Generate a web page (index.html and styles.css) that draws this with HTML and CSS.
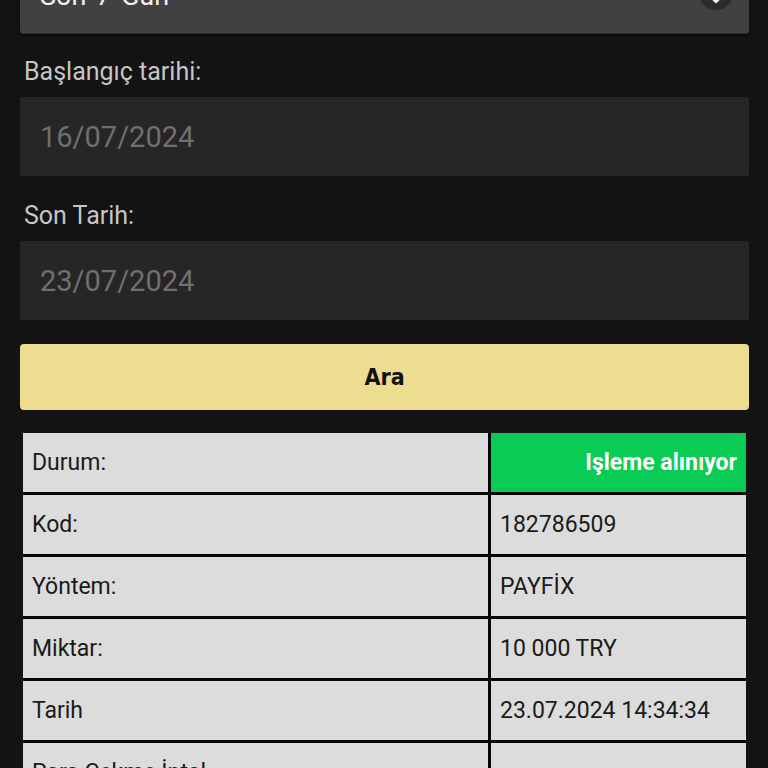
FILE: index.html
```html
<!DOCTYPE html>
<html lang="tr">
<head>
<meta charset="utf-8">
<title>Para Çekme Geçmişi</title>
<link rel="stylesheet" href="styles.css">
</head>
<body>
<div class="page">
  <div class="select">
    <span class="select-text">Son 7 Gün</span>
    <span class="select-btn">
      <svg width="14" height="10" viewBox="0 0 14 10"><path d="M2 2 L7 7 L12 2" fill="none" stroke="#fff" stroke-width="2.4" stroke-linecap="round" stroke-linejoin="round"/></svg>
    </span>
  </div>

  <div class="label first">Başlangıç tarihi:</div>
  <div class="input">16/07/2024</div>

  <div class="label">Son Tarih:</div>
  <div class="input">23/07/2024</div>

  <button class="search">Ara</button>

  <table class="details">
    <colgroup><col class="c1"><col class="c2"></colgroup>
    <tr><td>Durum:</td><td class="status">Işleme alınıyor</td></tr>
    <tr><td>Kod:</td><td>182786509</td></tr>
    <tr><td>Yöntem:</td><td>PAYFİX</td></tr>
    <tr><td>Miktar:</td><td>10 000 TRY</td></tr>
    <tr><td>Tarih</td><td>23.07.2024 14:34:34</td></tr>
    <tr><td>Para Çekme İptal</td><td></td></tr>
  </table>
</div>
</body>
</html>
```

FILE: styles.css
```css
html, body {
  margin: 0;
  padding: 0;
  background: #131313;
}
.page {
  height: 768px;
  overflow: hidden;
  padding: 0 19px 0 20px;
  font-family: Roboto, "Noto Sans", sans-serif;
}
.select {
  margin-top: -46px;
  height: 80px;
  background: #414141;
  border-radius: 3px;
  border-bottom: 1px solid #2e2e2e;
  box-shadow: 0 2px 3px rgba(0,0,0,0.55);
  display: flex;
  align-items: center;
  justify-content: space-between;
  padding: 0 15px 0 20px;
  box-sizing: border-box;
}
.select-text {
  color: #f2f2f2;
  font-size: 27px;
  word-spacing: 3px;
  position: relative;
  top: 2px;
}
.select-btn {
  width: 36px;
  height: 36px;
  border-radius: 50%;
  background: radial-gradient(circle at 50% 55%, #2a2a2a 55%, #353535 80%, #3e3e3e 100%);
  display: flex;
  align-items: center;
  justify-content: center;
  position: relative;
  top: -2px;
}
.select-btn svg { position: relative; top: 8px; }
.label {
  color: #c6c6c6;
  font-size: 25px;
  line-height: 28px;
  margin: 26px 0 11px 4px;
}
.label.first { margin-top: 24px; }
.input {
  height: 79px;
  background: #262626;
  border-radius: 2px;
  color: #6f6f6f;
  font-size: 29px;
  display: flex;
  align-items: center;
  padding-left: 20px;
}
.search {
  display: block;
  width: 100%;
  height: 66px;
  margin-top: 24px;
  border: none;
  border-radius: 4px;
  background: #ecdd91;
  color: #111;
  font-family: "DejaVu Sans Condensed", "DejaVu Sans", sans-serif;
  font-stretch: condensed;
  font-weight: bold;
  font-size: 23px;
  padding: 0;
}
.details {
  margin: 23px 3px 0 3px;
  width: 723px;
  table-layout: fixed;
  border-collapse: separate;
  border-spacing: 0;
}
.c1 { width: 468px; }
.c2 { width: 255px; }
.details td {
  background: #dcdcdc;
  height: 62px;
  padding: 0 9px;
  font-size: 23px;
  color: #1a1a1a;
  box-sizing: border-box;
  white-space: nowrap;
  border-bottom: 3px solid #060606;
}
.details td:first-child {
  border-right: 3px solid #060606;
}
.details td.status {
  background: #0acb54;
  color: #fff;
  font-weight: bold;
  text-align: right;
}
```
